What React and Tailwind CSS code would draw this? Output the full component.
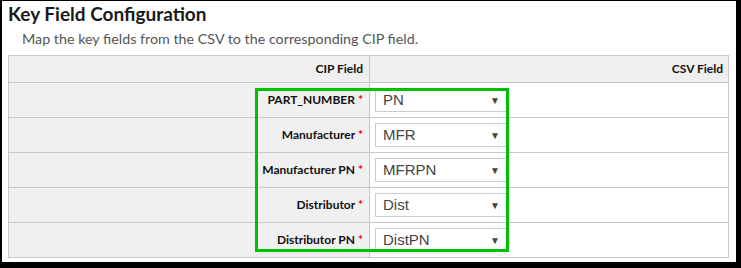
import React from 'react';

const rows = [
  { label: 'PART_NUMBER', value: 'PN' },
  { label: 'Manufacturer', value: 'MFR' },
  { label: 'Manufacturer PN', value: 'MFRPN' },
  { label: 'Distributor', value: 'Dist' },
  { label: 'Distributor PN', value: 'DistPN' },
];

const SelectBox = ({ value }) => (
  <div className="w-[132px] h-[24px] border border-[#cccccc] bg-white flex items-center justify-between pl-[7px] pr-[6px]">
    <span className="text-[15px] text-[#444] font-['Liberation_Sans',sans-serif]">{value}</span>
    <span className="text-[10px] text-[#444]">▼</span>
  </div>
);

export default function App() {
  return (
    <div className="w-[741px] h-[268px] bg-black pl-[2px] pt-[1px] pr-[5px] pb-[6px] font-['Lato',sans-serif]">
      <div className="relative h-full bg-white pl-[6px] pr-[7px]">
        {/* Title */}
        <h2 className="pt-[2px] text-[19px] leading-[21px] font-bold text-[#1a1a1a]">Key Field Configuration</h2>
        <p className="pl-[14px] pt-[7px] text-[14.3px] leading-[16px] text-[#555]">
          Map the key fields from the CSV to the corresponding CIP field.
        </p>

        {/* Mapping table */}
        <table className="mt-[8px] w-full border-collapse border border-[#c8c8c8] text-[12px] text-[#111]">
          <thead>
            <tr className="h-[27px] bg-[#efefef]">
              <th className="w-[361px] border border-[#c8c8c8] text-right pr-[6px] font-bold">CIP Field</th>
              <th className="border border-[#c8c8c8] text-right pr-[5px] font-bold">CSV Field</th>
            </tr>
          </thead>
          <tbody>
            {rows.map((row) => (
              <tr key={row.label} className="h-[35px]">
                <td className="bg-[#f0f0f0] border border-[#c8c8c8] text-right pr-[6px] font-bold">
                  {row.label} <span className="text-[#e00]">*</span>
                </td>
                <td className="bg-white border border-[#c8c8c8] pl-[5px]">
                  <SelectBox value={row.value} />
                </td>
              </tr>
            ))}
          </tbody>
        </table>

        {/* Highlight annotation */}
        <div className="absolute left-[253px] top-[87px] w-[254px] h-[164px] border-[3px] border-[#00c000] pointer-events-none" />
      </div>
    </div>
  );
}
